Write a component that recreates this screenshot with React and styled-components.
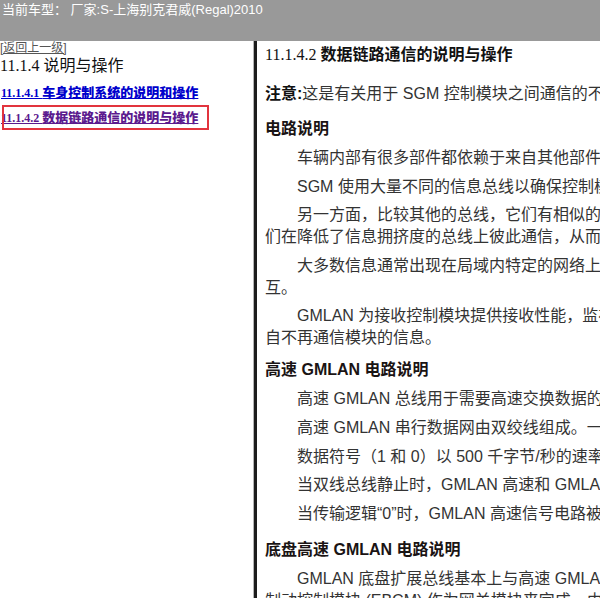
import { createGlobalStyle, styled } from 'styled-components';

const GlobalStyle = createGlobalStyle`
    html, body {
        margin: 0;
        padding: 0;
        background: #fff;
        overflow: hidden;
    }
`;

const sans = `"Liberation Sans", "Noto Sans CJK SC", sans-serif`;
const serif = `"Liberation Serif", "Noto Sans CJK SC", serif`;

const App = () => {
    return (
        <Page>
            <GlobalStyle />
            <TopBar>当前车型：&nbsp;厂家:S-上海别克君威(Regal)2010</TopBar>
            <Main>
                <LeftPanel>
                    <BackLink>[返回上一级]</BackLink>
                    <SectionTitle>11.1.4 说明与操作</SectionTitle>
                    <TocLink $visited={false}>
                        11.1.4.1 <b>车身控制系统的说明和操作</b>
                    </TocLink>
                    <TocLink $visited $marked>
                        11.1.4.2 <b>数据链路通信的说明与操作</b>
                    </TocLink>
                </LeftPanel>
                <Divider />
                <RightPanel>
                    <DocTitle>
                        11.1.4.2 <b>数据链路通信的说明与操作</b>
                    </DocTitle>
                    <Note>
                        <b>注意:</b>这是有关用于 SGM 控制模块之间通信的不同串行数据总线的一般说明。
                    </Note>
                    <Heading $gap={13}>电路说明</Heading>
                    <Para>车辆内部有很多部件都依赖于来自其他部件的信息，以完成各自的功能。</Para>
                    <Para>SGM 使用大量不同的信息总线以确保控制模块之间的信息交换。</Para>
                    <Para>
                        另一方面，比较其他的总线，它们有相似的软件和硬件，这就使得它
                        <br />
                        们在降低了信息拥挤度的总线上彼此通信，从而提高了系统的性能。
                    </Para>
                    <Para>
                        大多数信息通常出现在局域内特定的网络上，而不影响其他网络的交
                        <br />
                        互。
                    </Para>
                    <Para>
                        GMLAN 为接收控制模块提供接收性能，监视和识别并使用来
                        <br />
                        自不再通信模块的信息。
                    </Para>
                    <Heading $gap={10}>高速 GMLAN 电路说明</Heading>
                    <Para>高速 GMLAN 总线用于需要高速交换数据的系统之间。</Para>
                    <Para>高速 GMLAN 串行数据网由双绞线组成。一条为高速正极电路。</Para>
                    <Para>数据符号（1 和 0）以 500 千字节/秒的速率依次传输。</Para>
                    <Para>当双线总线静止时，GMLAN 高速和 GMLAN 低速电路均不被驱动。</Para>
                    <Para>当传输逻辑“0”时，GMLAN 高速信号电路被驱动至较高电压。</Para>
                    <Heading $gap={14}>底盘高速 GMLAN 电路说明</Heading>
                    <Para>
                        GMLAN 底盘扩展总线基本上与高速 GMLAN 总线相同，由电子
                        <br />
                        制动控制模块 (EBCM) 作为网关模块来完成，由其负责通信。
                    </Para>
                </RightPanel>
            </Main>
        </Page>
    );
};

export default App;

const Page = styled.div`
    display: flex;
    flex-direction: column;
    width: 600px;
    height: 598px;
    overflow: hidden;
`;

const TopBar = styled.div`
    height: 41px;
    box-sizing: border-box;
    padding: 2px 2px 0;
    background: #999999;
    color: #fff;
    font-family: ${sans};
    font-size: 13px;
    line-height: 16px;
    white-space: nowrap;
`;

const Main = styled.div`
    display: flex;
    flex: 1;
    min-height: 0;
`;

const LeftPanel = styled.div`
    flex: 0 0 254px;
    display: flex;
    flex-direction: column;
    align-items: flex-start;
    border-right: 1px solid #b4b4b4;
    box-sizing: border-box;
`;

const BackLink = styled.a`
    font-family: ${sans};
    font-size: 12px;
    line-height: 14px;
    color: #555;
    text-decoration: underline;
    cursor: pointer;
`;

const SectionTitle = styled.div`
    margin-top: 1px;
    font-family: ${serif};
    font-size: 16px;
    line-height: 20px;
    color: #111;
`;

const TocLink = styled.a`
    position: relative;
    margin: ${({ $marked }) => ($marked ? '6px 0 0' : '7px 0 0')};
    padding-left: 1px;
    font-family: ${serif};
    font-size: 12px;
    font-weight: bold;
    line-height: 18px;
    color: ${({ $visited }) => ($visited ? '#5b1a8e' : '#0000cc')};
    text-decoration: underline;
    white-space: nowrap;
    cursor: pointer;
    b {
        font-family: "Noto Sans CJK SC", sans-serif;
        font-size: 13px;
        font-weight: 900;
    }
    ${({ $marked }) =>
        $marked &&
        `
        &::after {
            content: '';
            position: absolute;
            left: 2px;
            top: -3px;
            width: 207px;
            height: 25px;
            box-sizing: border-box;
            border: 2px solid #e2343e;
        }
    `}
`;

const Divider = styled.div`
    flex: 0 0 3px;
    background: #1c1c1c;
`;

const RightPanel = styled.div`
    flex: 1;
    min-width: 0;
    overflow: hidden;
    padding: 1px 0 0 8px;
    font-family: ${sans};
    font-size: 16px;
    line-height: 22px;
    color: #333;
    white-space: nowrap;
`;

const DocTitle = styled.div`
    margin-bottom: 17px;
    font-family: ${serif};
    color: #111;
    b {
        font-family: "Noto Sans CJK SC", sans-serif;
        font-weight: bold;
    }
`;

const Note = styled.p`
    margin: 0;
    b {
        color: #111;
    }
`;

const Heading = styled.h3`
    margin: ${({ $gap }) => $gap}px 0 7px;
    font-size: 16px;
    line-height: 22px;
    font-weight: bold;
    color: #1a1414;
`;

const Para = styled.p`
    margin: 6.6px 0 0;
    text-indent: 2em;
`;
